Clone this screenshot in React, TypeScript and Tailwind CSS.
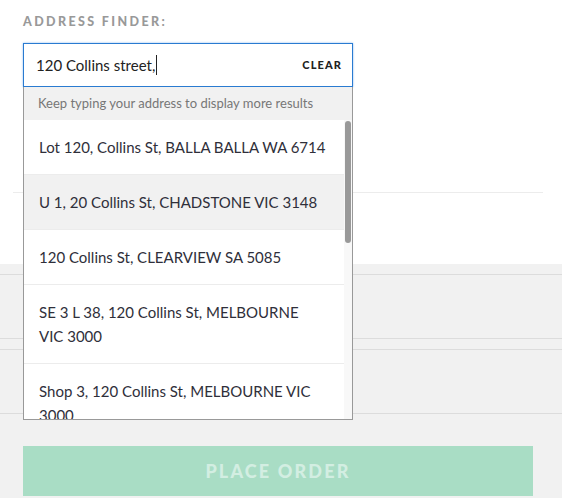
import React from 'react';

// line breaks kept as the widget wraps them
const results = [
  'Lot 120, Collins St, BALLA BALLA WA 6714',
  'U 1, 20 Collins St, CHADSTONE VIC 3148',
  '120 Collins St, CLEARVIEW SA 5085',
  'SE 3 L 38, 120 Collins St, MELBOURNE\nVIC 3000',
  'Shop 3, 120 Collins St, MELBOURNE VIC\n3000',
];

// index of the row under the pointer
const activeIndex = 1;

export default function App() {
  return (
    <div className="w-[562px] h-[498px] overflow-hidden bg-[#f1f1f1] font-['Lato',sans-serif] text-[#2f2f3a]">
      {/* form section */}
      <div className="bg-white h-[264px] pt-[14px]">
        <div className="px-[23px] text-[12.5px] leading-4 font-black tracking-[0.19em] text-[#999]">
          ADDRESS FINDER:
        </div>

        <div className="relative mx-[23px] mt-[13px] w-[330px] z-10">
          <div className="flex items-center h-[44px] border border-[#2a7bd1] shadow-[0_0_2px_#8bbcf0] bg-white pl-[12px] pr-[10px]">
            <span className="text-[15px] leading-6 text-[#222]">120 Collins street,</span>
            <span className="w-px h-[20px] bg-[#222] ml-px" />
            <span className="ml-auto text-[11px] font-black tracking-[0.1em] text-[#222]">CLEAR</span>
          </div>

          {/* suggestions */}
          <div className="absolute top-full left-0 w-[330px] h-[333px] flex flex-col bg-white border-x border-b border-[#999]">
            <div className="h-[33px] shrink-0 flex items-center px-[14px] bg-[#f1f1f1] text-[13px] text-[#777]">
              Keep typing your address to display more results
            </div>
            <div className="flex flex-1 min-h-0">
              <div className="flex-1 overflow-hidden">
                {results.map((r, i) => (
                  <div
                    key={r}
                    className={
                      'px-[15px] py-[15px] text-[15px] leading-6 whitespace-pre-line border-b border-[#ececec] ' +
                      (i === activeIndex ? 'bg-[#f1f1f1]' : 'bg-white')
                    }
                  >
                    {r}
                  </div>
                ))}
              </div>
              <div className="w-[8px] shrink-0 bg-[#f8f8f8] pt-px pl-px">
                <div className="w-[6px] h-[122px] rounded-[3px] bg-[#999]" />
              </div>
            </div>
          </div>
        </div>

        <div className="mx-[13px] w-[530px] mt-[105px] border-t border-[#ececec]" />
      </div>

      {/* collapsed sections behind the dropdown */}
      <div className="h-[10px]" />
      <div className="h-[64px] border-t border-[#dcdcdc]" />
      <div className="h-[11px] border-t border-[#dcdcdc]" />
      <div className="h-[64px] border-t border-[#dcdcdc]" />
      <div className="border-t border-[#dcdcdc] pt-[32px] px-[23px]">
        <button className="w-[510px] h-[50px] bg-[#a9ddc5] text-[18px] font-black tracking-[0.12em] text-[#d3eee2]">
          PLACE ORDER
        </button>
      </div>
    </div>
  );
}
